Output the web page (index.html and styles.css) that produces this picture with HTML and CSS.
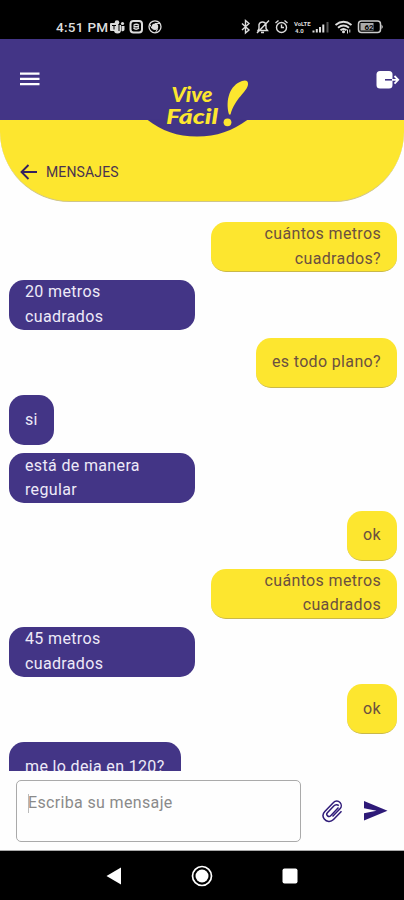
FILE: index.html
```
<!DOCTYPE html>
<html lang="es">
<head>
	<meta charset="UTF-8">
	<title>Vive Fácil - Mensajes</title>
	<link rel="stylesheet" href="styles.css">
</head>
<body>
	<div class="phone">
		<div class="statusBar">
			<span class="clock">4:51 PM</span>
			<svg class="statusLeft" width="54" height="16" viewBox="109 19 54 16">
				<!-- teams -->
				<g fill="#ddd">
					<circle cx="117" cy="22.500" r="2.300"/>
					<circle cx="122.500" cy="23.500" r="1.600"/>
					<rect x="110" y="23" width="8" height="8" rx="1"/>
					<path d="M114 25h7v5a3.500 3.500 0 0 1-7 0zM121.500 26h3v3.500a2 2 0 0 1-3 1.500z"/>
				</g>
				<path d="M112 25.500h4M114 25.500v4M119 25v6" stroke="#000" fill="none"/>
				<!-- app -->
				<rect x="130.500" y="21" width="11.500" height="11.500" rx="3" fill="none" stroke="#ddd" stroke-width="2"/>
				<path d="M133.500 25.500q3-2.500 5.500 0M139 28q-3 2.500-5.500 0M133.500 26.800h5.500" fill="none" stroke="#ddd" stroke-width="1.400"/>
				<!-- chrome -->
				<circle cx="155" cy="26.800" r="6" fill="none" stroke="#ddd" stroke-width="1.300"/>
				<circle cx="155" cy="26.800" r="3.200" fill="#ddd"/>
				<path d="M155 23.500h5M152 28.500l-2-4M157.500 29l-2 3.500" stroke="#ddd" fill="none"/>
			</svg>
			<svg class="statusRight" width="146" height="18" viewBox="239 18 146 18">
				<g fill="none" stroke="#ddd" stroke-width="1.400">
					<!-- bluetooth -->
					<path d="M242 23.500l7 6.500-3.500 3V20.500l3.500 3-7 6.500"/>
					<!-- bell off -->
					<path d="M258 30.500h9.500l-1.500-2v-4a3.700 3.700 0 0 0-7 0v4zM261 32.500h3M257 33L269 20.500"/>
					<!-- alarm -->
					<circle cx="281.500" cy="27.500" r="5"/>
					<path d="M281.500 24.500v3h2.500M275.500 23l3-2.500M287.500 23l-3-2.500" />
				</g>
				<g class="volte" fill="#ddd">
					<text x="294" y="26.300">Vo</text>
					<text x="301" y="25.500">LTE</text>
					<text x="295" y="32.500">4.0</text>
				</g>
				<g stroke="#ddd" stroke-width="2">
					<path d="M313.500 32.500v-2M316.800 32.500v-3.500M320 32.500v-5.500M323.300 32.500v-8"/>
					<path d="M327.500 32.500v-10.500" stroke="#555"/>
				</g>
				<g fill="none" stroke="#ddd" stroke-width="1.900">
					<path d="M335.500 25q8-6.500 16 0M338 27.700q5.500-4.500 11 0M340.500 30.200q3-2.500 6 0"/>
				</g>
				<circle cx="343.500" cy="31.800" r="1.500" fill="#ddd"/>
				<path d="M347.500 29.500v4M349.800 29.500v3" stroke="#ddd"/>
				<rect x="358.500" y="21" width="22" height="11.500" rx="3" fill="none" stroke="#ccc" stroke-width="1.500"/>
				<rect x="360.500" y="23" width="13" height="7.500" fill="#aaa"/>
				<path d="M381.500 24.500q2.500 2.300 0 4.600z" fill="#ddd"/>
				<text class="battery" x="364.500" y="30">62</text>
			</svg>
		</div>

		<div class="header">
			<svg class="menu" width="20" height="16" viewBox="0 0 20 16">
				<path d="M0 1.700h19.500M0 6.900h19.500M0 12.100h19.500" stroke="#fff" stroke-width="2.300"/>
			</svg>
			<svg class="exit" width="24" height="20" viewBox="0 0 24 20">
				<rect x="0.500" y="1" width="16" height="17.500" rx="3.500" fill="#fff"/>
				<path d="M9 9.800h7" stroke="#433586" stroke-width="1.600"/>
				<path d="M16 9.800h6M18.500 6l3.700 3.800-3.700 3.800" stroke="#fff" stroke-width="1.800" fill="none"/>
			</svg>
			<svg class="logo" width="106" height="64" viewBox="145 75 106 64">
				<path d="M147 119.500C162 131 177 136.500 197 136.500S232 131 248 119.500z" fill="#433586"/>
				<g class="logoText">
					<text x="171.500" y="101.500" textLength="41" lengthAdjust="spacingAndGlyphs">Vive</text>
					<text x="166" y="123.500" textLength="52" lengthAdjust="spacingAndGlyphs">Fácil</text>
				</g>
				<path d="M229 114.500C225 100 230 85 242 81C246 79.500 248.500 81 248 84.500C247 92 235 98 230.500 114.500z" fill="#fde62f"/>
				<circle cx="227.500" cy="122.300" r="3.900" fill="#fde62f"/>
			</svg>
		</div>

		<div class="titleBar">
			<svg width="18" height="16" viewBox="0 0 18 16">
				<path d="M17 8H1.500M8.500 1L1.500 8l7 7" fill="none" stroke="#35205f" stroke-width="1.900"/>
			</svg>
			<span>MENSAJES</span>
		</div>

		<div class="chat">
			<div class="message mine">cuántos metros cuadrados?</div>
			<div class="message">20 metros cuadrados</div>
			<div class="message mine">es todo plano?</div>
			<div class="message">si</div>
			<div class="message">está de manera regular</div>
			<div class="message mine">ok</div>
			<div class="message mine">cuántos metros cuadrados</div>
			<div class="message">45 metros cuadrados</div>
			<div class="message mine">ok</div>
			<div class="message">me lo deja en 120?</div>
		</div>

		<div class="composer">
			<div class="input">Escriba su mensaje</div>
			<svg class="clip" width="22" height="24" viewBox="0 0 22 24">
				<path d="M17.500 8.500l-7.800 8.200a2.200 2.200 0 0 1-3.300-3L13 6.800a3.300 3.300 0 0 1 4.800-.2M20.500 12.300l-8 8.200a6 6 0 0 1-9.200-.5 5.800 5.800 0 0 1 .5-7.500l8.700-9a4.400 4.400 0 0 1 6.500 0 4.600 4.600 0 0 1 0 6.300l-7.500 7.800"/>
			</svg>
			<svg class="send" width="24" height="20" viewBox="0 0 24 20">
				<path d="M0 0L23.500 9.700 0 19.500v-7.300l12.500-2.500L0 7.300z" fill="#2e1a78"/>
			</svg>
		</div>

		<div class="navBar">
			<svg width="16" height="18" viewBox="0 0 16 18"><path d="M15 0.500v17L0.500 9z" fill="#fff"/></svg>
			<svg width="22" height="22" viewBox="0 0 22 22">
				<circle cx="11" cy="11" r="9.500" fill="none" stroke="#fff" stroke-width="1.700"/>
				<circle cx="11" cy="11" r="6.500" fill="#fff"/>
			</svg>
			<svg width="16" height="16" viewBox="0 0 16 16"><rect x="0.500" y="0.500" width="15" height="15" rx="2" fill="#fff"/></svg>
		</div>
	</div>
</body>
</html>
```
FILE: styles.css
```
*{
	margin: 0;
	padding: 0;
	box-sizing: border-box;
}
body{
	font-family: Roboto, "Liberation Sans", sans-serif;
	background-color: #fefefe;
}
svg{
	display: block;
	flex: none;
}
.phone{
	display: flex;
	flex-direction: column;
	width: 404px;
	height: 900px;
	overflow: hidden;
}
.statusBar{
	display: flex;
	align-items: center;
	height: 39px;
	padding: 15px 19px 0 56px;
	background-color: #000;
	color: #ddd;
}
.clock{
	width: 53px;
	font-size: 13.500px;
	font-weight: 500;
	letter-spacing: 0.300px;
	white-space: nowrap;
}
.statusRight{
	margin-left: auto;
}
.volte{
	font-size: 6px;
	font-weight: 700;
}
.battery{
	font-size: 8px;
	font-weight: 700;
	fill: #000;
}
.header{
	position: relative;
	display: flex;
	justify-content: space-between;
	align-items: center;
	height: 81px;
	padding: 0 4px 0 20px;
	background-color: #433586;
}
.logo{
	position: absolute;
	left: 145px;
	top: 36px;
}
.logoText{
	font-family: Lato, sans-serif;
	font-size: 21px;
	font-weight: 900;
	font-style: italic;
	fill: #fde62f;
}
.titleBar{
	display: flex;
	align-items: center;
	gap: 8px;
	height: 82px;
	padding: 22px 0 0 20px;
	background-color: #fde62f;
	border-bottom: 1px solid #cfc58a;
	border-radius: 0 0 70px 70px;
	color: #4a3350;
	font-size: 14px;
	letter-spacing: 0.150px;
}
.chat{
	display: flex;
	flex-direction: column;
	align-items: flex-start;
	gap: 7.800px;
	height: 569px;
	padding: 20px 7px 0 9px;
	overflow: hidden;
}
.message{
	flex: none;
	display: flex;
	align-items: center;
	max-width: 186px;
	height: 50px;
	padding: 0 16px;
	border-radius: 15px;
	background-color: #433586;
	color: #eeeaf8;
	font-size: 16px;
	line-height: 24.500px;
	letter-spacing: 0.350px;
}
.mine{
	align-self: flex-end;
	background-color: #fde62f;
	border-bottom: 1px solid #c9b84a;
	color: #6b5040;
	text-align: right;
}
.composer{
	display: flex;
	align-items: center;
	height: 80px;
	padding: 0 16px;
	border-bottom: 1px solid #aaa;
}
.input{
	width: 285px;
	height: 62px;
	padding: 12px 11px;
	border: 1px solid #aaa;
	border-radius: 5px;
	color: #8a8a8a;
	font-size: 16px;
	letter-spacing: 0.350px;
}
/* text cursor */
.input::before{
	content: "";
	display: inline-block;
	width: 1px;
	height: 19px;
	margin-right: -1px;
	vertical-align: middle;
	background-color: #bbb;
}
.clip{
	margin-left: 20px;
	fill: none;
	stroke: #2e1a78;
	stroke-width: 1.500;
}
.send{
	margin-left: 21px;
}
.navBar{
	display: flex;
	justify-content: space-between;
	align-items: center;
	height: 49px;
	padding: 0 106px;
	background-color: #000;
}
```
